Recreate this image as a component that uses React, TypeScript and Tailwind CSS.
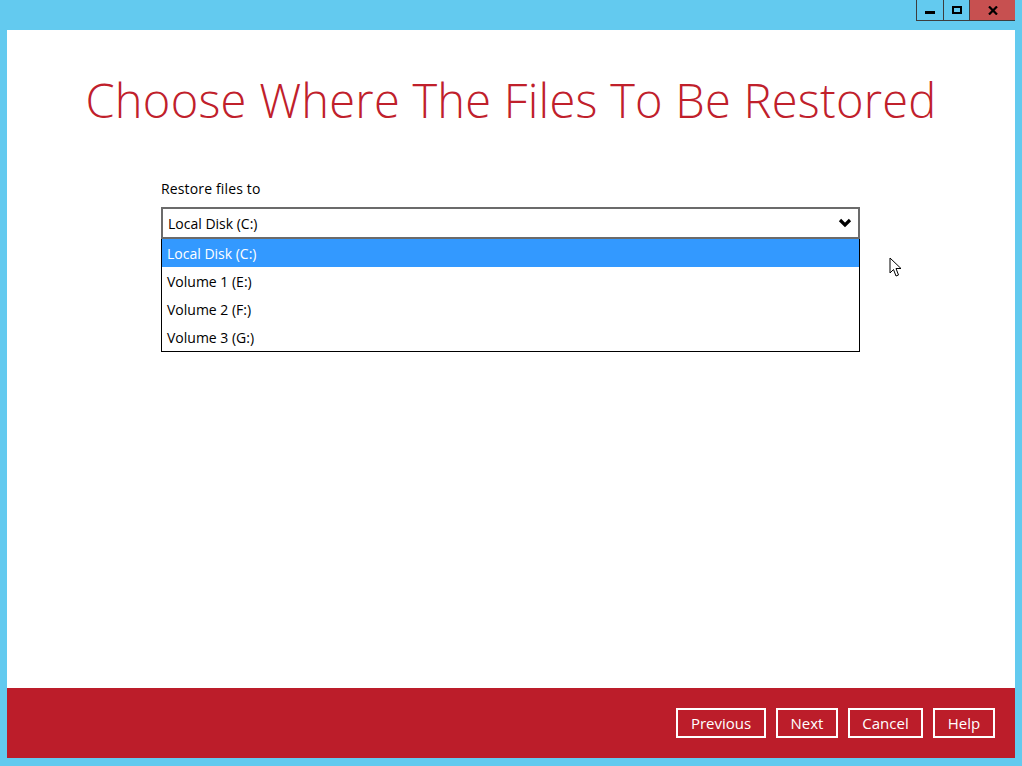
import React from 'react';

const drives = ['Local Disk (C:)', 'Volume 1 (E:)', 'Volume 2 (F:)', 'Volume 3 (G:)'];
const buttons = ['Previous', 'Next', 'Cancel', 'Help'];

export default function App() {
  return (
    <div
      className="relative w-[1022px] h-[766px] bg-[#63caef] flex flex-col overflow-hidden"
      style={{ fontFamily: '"Open Sans", "Noto Sans", sans-serif' }}
    >
      {/* Title bar */}
      <div className="h-[30px] flex justify-end pr-[7px]">
        <div className="flex h-[21px] border border-[#3d3d3d] border-t-0 border-r-0">
          <button className="w-[27px] flex items-end justify-center pb-[6px] border-r border-[#3d3d3d]">
            <span className="block w-[10px] h-[3px] bg-black" />
          </button>
          <button className="w-[26px] flex items-center justify-center border-r border-[#3d3d3d]">
            <span className="block w-[10px] h-[8px] border-2 border-black" />
          </button>
          <button className="w-[45px] bg-[#c75050] flex items-center justify-center">
            <svg width="10" height="9" viewBox="0 0 10 9">
              <path d="M1 0.5 L9 8.5 M9 0.5 L1 8.5" stroke="black" strokeWidth="2.2" />
            </svg>
          </button>
        </div>
      </div>

      {/* Main panel */}
      <div className="mx-[7px] flex-1 bg-white flex flex-col">
        <h1 className="text-[#c0202b] text-[47px] font-light text-center pt-[41px] leading-[58px] tracking-[0.25px]">
          Choose Where The Files To Be Restored
        </h1>

        <div className="ml-[154px] w-[699px] mt-[50px]">
          <div className="text-[14px] text-black leading-[20px] tracking-[0.15px]">Restore files to</div>
          <div className="mt-[8px] h-[32px] border-2 border-[#6b6b6b] flex items-center justify-between pl-[5px] pr-[6px] text-[14px] text-black">
            <span>Local Disk (C:)</span>
            <svg width="14" height="10" viewBox="0 0 14 10">
              <path d="M2 2 L7 7 L12 2" stroke="black" strokeWidth="3.2" fill="none" />
            </svg>
          </div>
          <div className="border border-black border-t-0">
            {drives.map((d, i) => (
              <div
                key={d}
                className={`h-[28px] flex items-center pl-[5px] text-[14px] ${
                  i === 0 ? 'bg-[#3399ff] text-white' : 'text-black'
                }`}
              >
                {d}
              </div>
            ))}
          </div>
        </div>
      </div>

      {/* Footer */}
      <div className="mx-[7px] h-[70px] bg-[#bc1d2a] flex items-center justify-end gap-[10px] pr-[20px] mb-[8px]">
        {buttons.map((b) => (
          <button
            key={b}
            className={`h-[30px] border-2 border-white text-white text-[15px] ${
              b === 'Previous' ? 'w-[90px]' : b === 'Cancel' ? 'w-[75px]' : 'w-[62px]'
            }`}
          >
            {b}
          </button>
        ))}
      </div>

      {/* Mouse cursor */}
      <svg className="absolute left-[889px] top-[257px]" width="14" height="22" viewBox="0 0 14 22">
        <path
          d="M1 1 L1 16 L4.5 12.5 L7 19 L9.5 18 L7 11.5 L12 11.5 Z"
          fill="white"
          stroke="black"
          strokeWidth="1"
          strokeLinejoin="miter"
        />
      </svg>
    </div>
  );
}
